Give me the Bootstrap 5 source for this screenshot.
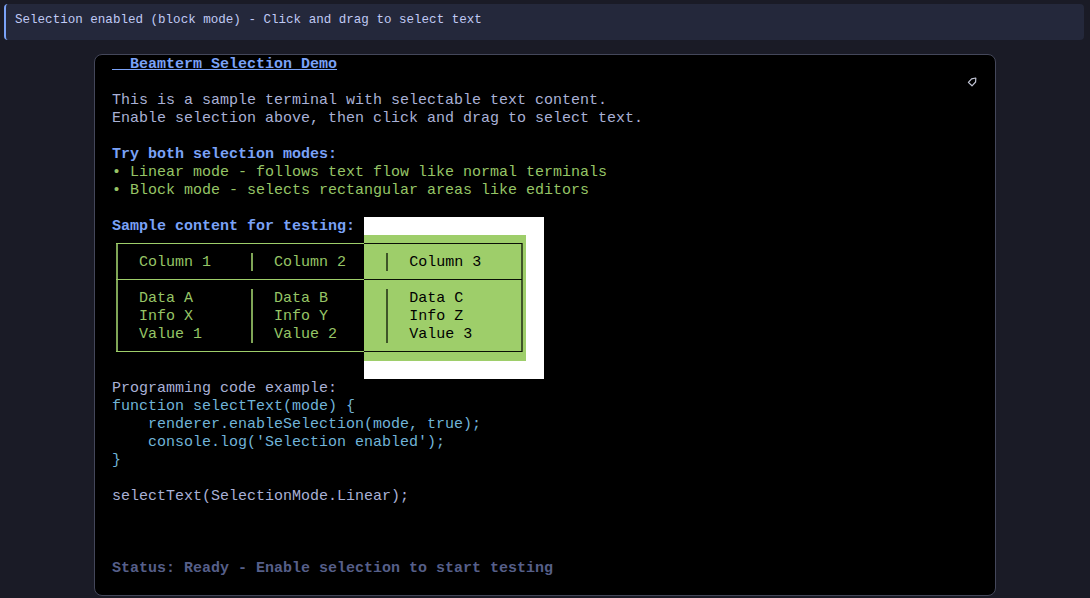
<!DOCTYPE html>
<html lang="en">
<head>
<meta charset="utf-8">
<title>Beamterm Selection Demo</title>
<link href="https://cdn.jsdelivr.net/npm/bootstrap@5.3.0/dist/css/bootstrap.min.css" rel="stylesheet">
<style>
html, body { height: 100%; }
body { background: #1a1b26; overflow: hidden; }
.info-strip { height: 36px; margin: 4px 6px 14px 4px; padding-left: 9px; background: #24283b; border-left: 2px solid #7aa2f7; border-radius: 4px; color: #c0caf5; font: 12.55px/33px "Liberation Mono", monospace; }
.term-box { width: 902px; height: 542px; margin-left: 94px; background: #000; border: 1px solid #44475a; border-radius: 8px; padding: 0 0 0 17px; }
.term-text { margin: 0; overflow: visible; font: 15px/20px "Liberation Mono", monospace; color: #a9b1d6; }
.ln { display: block; height: 18px; white-space: pre; }
.ttl { color: #7aa2f7; font-weight: 700; text-decoration: underline; }
.hd { color: #7aa2f7; font-weight: 700; }
.gr { color: #96c566; }
.cy { color: #70b4d8; }
.st { color: #565f89; font-weight: 700; }
.sel-g, .sel-w { display: inline-block; height: 18px; vertical-align: top; }
.sel-g { background: #9ece6a; color: #000; }
.sel-w { background: #fff; }
.bx { display: inline-block; height: 18px; vertical-align: top; color: transparent; background-repeat: no-repeat; --l: #9ece6a; --v: #7fa556; }
.sel-g .bx { --l: #0a0f05; --v: #3f5528; }
.bh { background-image: linear-gradient(var(--l), var(--l)); background-position: 0 8px; background-size: 100% 1px; }
.bv { background-image: linear-gradient(var(--v), var(--v)); background-position: 4px 0; background-size: 2px 100%; }
.tl, .tr, .ml, .mr, .bl, .br { background-image: linear-gradient(var(--l), var(--l)), linear-gradient(var(--v), var(--v)); }
.tl { background-position: 4px 8px, 4px 8px; background-size: 5px 1px, 2px 10px; }
.tr { background-position: 0 8px, 4px 8px; background-size: 5px 1px, 2px 10px; }
.ml { background-position: 4px 8px, 4px 0; background-size: 5px 1px, 2px 18px; }
.mr { background-position: 0 8px, 4px 0; background-size: 5px 1px, 2px 18px; }
.bl { background-position: 4px 8px, 4px 0; background-size: 5px 1px, 2px 9px; }
.br { background-position: 0 8px, 4px 0; background-size: 5px 1px, 2px 9px; }
.tag-line { padding-right: 18px; }
.tag-ico { width: 10px; height: 10px; margin-top: 4px; }
</style>
</head>
<body>
<div class="info-strip">Selection enabled (block mode) - Click and drag to select text</div>
<div class="d-flex">
  <div class="term-box overflow-hidden">
<pre class="term-text"><span class="ln"><span class="ttl">  Beamterm Selection Demo</span></span><span class="ln d-flex justify-content-end tag-line"><svg class="tag-ico" viewBox="0 0 10 10" fill="none" stroke="#c0c4d4" stroke-width="1.2" stroke-linejoin="round"><path d="M4.6 1.8 L8.8 1 L8.6 5 L5 8.8 L1.4 5.4 Z"/></svg></span><span class="ln">This is a sample terminal with selectable text content.</span><span class="ln">Enable selection above, then click and drag to select text.</span><span class="ln"> </span><span class="ln hd">Try both selection modes:</span><span class="ln gr">• Linear mode - follows text flow like normal terminals</span><span class="ln gr">• Block mode - selects rectangular areas like editors</span><span class="ln"> </span><span class="ln"><span class="hd">Sample content for testing: </span><span class="sel-w">                    </span></span><span class="ln gr"><span class="bx tl">┌</span><span class="bx bh">───────────────────────────</span><span class="sel-g"><span class="bx bh">─────────────────</span><span class="bx tr">┐</span></span><span class="sel-w">  </span></span><span class="ln gr"><span class="bx bv">│</span>  Column 1    <span class="bx bv">│</span>  Column 2  <span class="sel-g">  <span class="bx bv">│</span>  Column 3    <span class="bx bv">│</span></span><span class="sel-w">  </span></span><span class="ln gr"><span class="bx ml">├</span><span class="bx bh">───────────────────────────</span><span class="sel-g"><span class="bx bh">─────────────────</span><span class="bx mr">┤</span></span><span class="sel-w">  </span></span><span class="ln gr"><span class="bx bv">│</span>  Data A      <span class="bx bv">│</span>  Data B    <span class="sel-g">  <span class="bx bv">│</span>  Data C      <span class="bx bv">│</span></span><span class="sel-w">  </span></span><span class="ln gr"><span class="bx bv">│</span>  Info X      <span class="bx bv">│</span>  Info Y    <span class="sel-g">  <span class="bx bv">│</span>  Info Z      <span class="bx bv">│</span></span><span class="sel-w">  </span></span><span class="ln gr"><span class="bx bv">│</span>  Value 1     <span class="bx bv">│</span>  Value 2   <span class="sel-g">  <span class="bx bv">│</span>  Value 3     <span class="bx bv">│</span></span><span class="sel-w">  </span></span><span class="ln gr"><span class="bx bl">└</span><span class="bx bh">───────────────────────────</span><span class="sel-g"><span class="bx bh">─────────────────</span><span class="bx br">┘</span></span><span class="sel-w">  </span></span><span class="ln">                            <span class="sel-w">                    </span></span><span class="ln">Programming code example:</span><span class="ln cy">function selectText(mode) {</span><span class="ln cy">    renderer.enableSelection(mode, true);</span><span class="ln cy">    console.log('Selection enabled');</span><span class="ln cy">}</span><span class="ln"> </span><span class="ln">selectText(SelectionMode.Linear);</span><span class="ln"> </span><span class="ln"> </span><span class="ln"> </span><span class="ln st">Status: Ready - Enable selection to start testing</span></pre>
  </div>
</div>
<script src="https://cdn.jsdelivr.net/npm/bootstrap@5.3.0/dist/js/bootstrap.bundle.min.js"></script>
</body>
</html>
